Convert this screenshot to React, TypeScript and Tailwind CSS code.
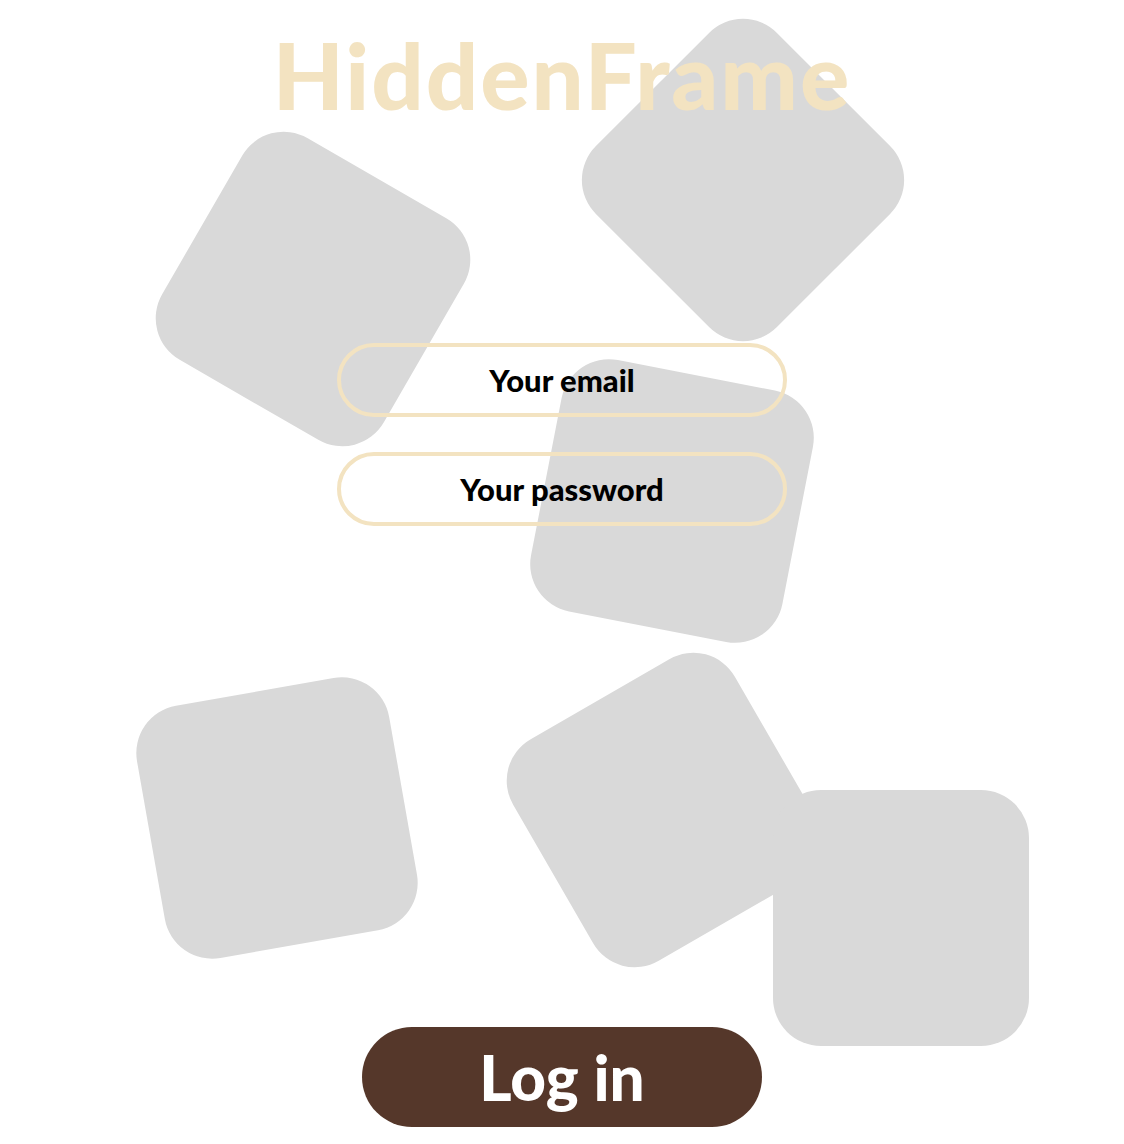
const shapes = [
  "left-[615px] top-[52px] rotate-45",
  "left-[185px] top-[161px] rotate-30",
  "left-[544px] top-[373px] rotate-[11deg]",
  "left-[149px] top-[690px] -rotate-10",
  "left-[536px] top-[682px] -rotate-30",
  "left-[773px] top-[790px]",
];

export default function App() {
  return (
    <main className="relative w-full min-h-[1144px] bg-white overflow-hidden font-['Lato','Liberation_Sans',sans-serif]">
      {/* floating background tiles */}
      <div className="absolute inset-0 pointer-events-none">
        {shapes.map((cls, i) => (
          <div
            key={i}
            className={`absolute w-[256px] h-[256px] rounded-[48px] bg-[#d9d9d9] ${cls}`}
          />
        ))}
      </div>

      <div className="relative flex flex-col items-center pt-[29px]">
        <h1 className="text-[92px] leading-none font-black text-[#f3e3c1] tracking-[2px]">
          HiddenFrame
        </h1>

        <form className="flex flex-col items-center gap-[35px] mt-[222px]">
          <input
            type="email"
            placeholder="Your email"
            className="w-[450px] h-[74px] rounded-full border-4 border-[#f3e3c1] bg-transparent text-center text-[31px] font-black text-black placeholder:text-black outline-none"
          />
          <input
            type="password"
            placeholder="Your password"
            className="w-[450px] h-[74px] rounded-full border-4 border-[#f3e3c1] bg-transparent text-center text-[31px] font-black text-black placeholder:text-black outline-none"
          />
        </form>

        <button className="mt-[501px] w-[400px] h-[100px] rounded-full bg-[#55372a] text-white text-[62px] font-black leading-none">
          Log in
        </button>
      </div>
    </main>
  );
}
